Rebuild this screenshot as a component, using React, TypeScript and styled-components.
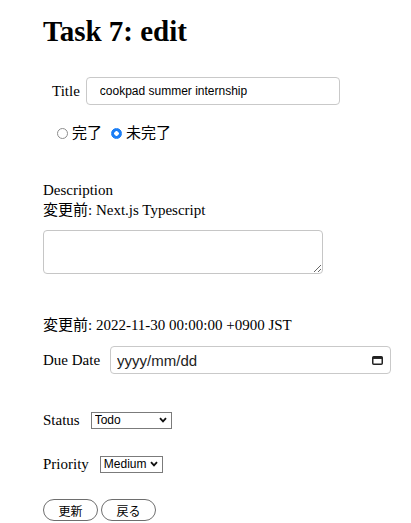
import React, { useState } from 'react';
import styled, { createGlobalStyle } from 'styled-components';

const GlobalStyle = createGlobalStyle`
  body {
    margin: 0;
    background: #fff;
    color: #000;
    font-family: "Liberation Serif", "Noto Sans CJK JP", serif;
    font-size: 15px;
  }
`;

const SANS = `"Liberation Sans", "Noto Sans CJK JP", sans-serif`;

const Page = styled.div`
  padding: 0 0 0 43px;
`;

const Heading = styled.h1`
  margin: 13px 0 0;
  font-size: 29px;
  line-height: 37px;
  font-weight: bold;
`;

const Form = styled.form`
  display: flex;
  flex-direction: column;
  align-items: flex-start;
`;

interface IRow {
  top: number;
  indent?: number;
  gap?: number;
}

const Row = styled.div<IRow>`
  display: flex;
  align-items: center;
  margin-top: ${p => p.top}px;
  padding-left: ${p => p.indent || 0}px;
  gap: ${p => (p.gap === undefined ? 8 : p.gap)}px;
`;

const Label = styled.label`
  line-height: 20px;
  white-space: nowrap;
`;

const TextInput = styled.input`
  box-sizing: border-box;
  width: 254px;
  height: 28px;
  margin: 0;
  padding: 0 0 0 13px;
  border: 1px solid #c9c9c9;
  border-radius: 4px;
  font-family: ${SANS};
  font-size: 12px;
  color: #000;
  outline: none;
`;

const RadioLabel = styled.label`
  display: inline-flex;
  align-items: center;
  gap: 4px;
  line-height: 20px;
  font-size: 15px;
  cursor: pointer;
`;

const Radio = styled.input`
  appearance: none;
  box-sizing: border-box;
  width: 11px;
  height: 11px;
  margin: 0;
  border: 1px solid #8d8d8d;
  border-radius: 50%;
  background: #fff;

  &:checked {
    border-color: #1b7ef5;
    background: radial-gradient(circle, #fff 0 2px, #1b7ef5 2.5px);
  }
`;

interface IBlock {
  top: number;
}

const TextBlock = styled.div<IBlock>`
  margin-top: ${p => p.top}px;
  line-height: 20px;
`;

const TextArea = styled.textarea`
  box-sizing: border-box;
  display: block;
  width: 280px;
  height: 44px;
  margin: 10px 0 0;
  border: 1px solid #c6c6c6;
  border-radius: 4px;
  outline: none;
`;

const DateField = styled.label`
  box-sizing: border-box;
  display: flex;
  align-items: center;
  width: 281px;
  height: 28px;
  padding: 0 7px 0 6px;
  border: 1px solid #c9c9c9;
  border-radius: 4px;
`;

const DateText = styled.input`
  flex: 1;
  min-width: 0;
  border: none;
  outline: none;
  padding: 0;
  margin: 0;
  font-family: ${SANS};
  font-size: 15px;
  color: #1d1d1d;
  background: transparent;

  &::placeholder {
    color: #1d1d1d;
  }
`;

const SelectWrap = styled.span`
  position: relative;
  display: inline-flex;
`;

interface ISelect {
  w: number;
}

const Select = styled.select<ISelect>`
  appearance: none;
  box-sizing: border-box;
  width: ${p => p.w}px;
  height: 17px;
  margin: 0;
  padding: 0 0 0 3px;
  border: 1px solid #7b7b7b;
  border-radius: 0;
  background: #fff;
  font-family: ${SANS};
  font-size: 12px;
  line-height: 15px;
  color: #000;
  outline: none;
`;

const Chevron = styled.svg`
  position: absolute;
  right: 5px;
  top: 5px;
  width: 8px;
  height: 6px;
  pointer-events: none;
`;

const Buttons = styled.div`
  display: flex;
  gap: 3px;
  margin-top: 25px;
`;

const Button = styled.button`
  box-sizing: border-box;
  width: 55px;
  height: 22px;
  padding: 0;
  border: 1px solid #6e6e6e;
  border-radius: 11px;
  background: #fff;
  font-family: ${SANS};
  font-size: 12px;
  color: #000;
  cursor: pointer;
`;

const ChevronIcon = () => (
  <Chevron viewBox="0 0 8 6">
    <path d="M1 1.2 L4 4.4 L7 1.2" fill="none" stroke="#111" strokeWidth="1.8" />
  </Chevron>
);

const CalendarIcon = () => (
  <svg width="11" height="9" viewBox="0 0 11 9">
    <rect x="0.75" y="0.75" width="9.5" height="7.5" rx="1" fill="none" stroke="#222" strokeWidth="1.5" />
    <rect x="0.75" y="0.75" width="9.5" height="2.2" fill="#222" />
  </svg>
);

const App = () => {
  const [done, setDone] = useState(false);
  const [status, setStatus] = useState('todo');
  const [priority, setPriority] = useState('medium');

  return (
    <Page>
      <GlobalStyle />
      <Heading>Task 7: edit</Heading>
      <Form onSubmit={e => e.preventDefault()}>
        <Row top={27} indent={9} gap={6}>
          <Label htmlFor="title">Title</Label>
          <TextInput id="title" defaultValue="cookpad summer internship" />
        </Row>

        <Row top={18} indent={14} gap={9}>
          <RadioLabel>
            <Radio type="radio" name="done" checked={done} onChange={() => setDone(true)} />
            完了
          </RadioLabel>
          <RadioLabel>
            <Radio type="radio" name="done" checked={!done} onChange={() => setDone(false)} />
            未完了
          </RadioLabel>
        </Row>

        <TextBlock top={37}>
          <div>Description</div>
          <div>変更前: Next.js Typescript</div>
        </TextBlock>
        <TextArea />

        <TextBlock top={41}>変更前: 2022-11-30 00:00:00 +0900 JST</TextBlock>
        <Row top={11} gap={10}>
          <Label>Due Date</Label>
          <DateField>
            <DateText placeholder="yyyy/mm/dd" />
            <CalendarIcon />
          </DateField>
        </Row>

        <Row top={36} gap={11}>
          <Label>Status</Label>
          <SelectWrap>
            <Select w={81} value={status} onChange={e => setStatus(e.target.value)}>
              <option value="todo">Todo</option>
              <option value="doing">Doing</option>
              <option value="done">Done</option>
            </Select>
            <ChevronIcon />
          </SelectWrap>
        </Row>

        <Row top={24} gap={11}>
          <Label>Priority</Label>
          <SelectWrap>
            <Select w={63} value={priority} onChange={e => setPriority(e.target.value)}>
              <option value="low">Low</option>
              <option value="medium">Medium</option>
              <option value="high">High</option>
            </Select>
            <ChevronIcon />
          </SelectWrap>
        </Row>

        <Buttons>
          <Button type="submit">更新</Button>
          <Button type="button">戻る</Button>
        </Buttons>
      </Form>
    </Page>
  );
};

export default App;
